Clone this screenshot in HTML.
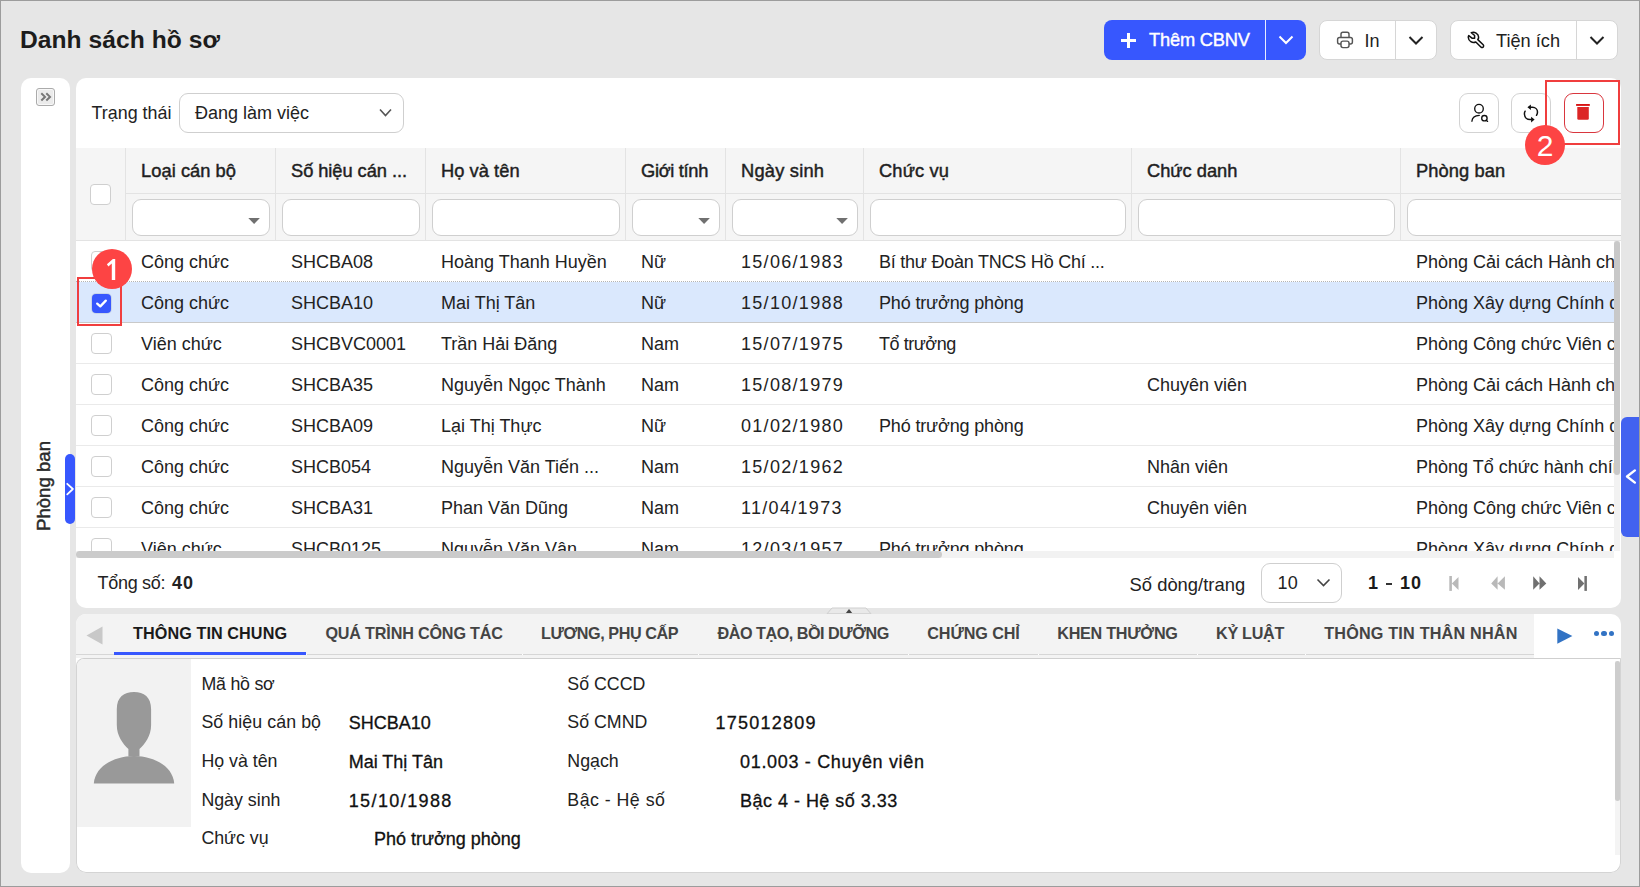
<!DOCTYPE html>
<html><head><meta charset="utf-8"><style>
html,body{margin:0;padding:0;}
body{width:1640px;height:887px;position:relative;overflow:hidden;background:#e6e6e6;font-family:'Liberation Sans', sans-serif;}
.frame{position:absolute;left:0;top:0;width:1640px;height:887px;border:1px solid #9c9c9c;box-sizing:border-box;pointer-events:none;z-index:50;}
.t{position:absolute;white-space:nowrap;line-height:1;font-family:'Liberation Sans', sans-serif;}
</style></head><body>
<div class="t" style="left:20px;top:27.59px;font-size:24.6px;font-weight:700;color:#1c1c1c;letter-spacing:0.054px;">Danh sách hồ sơ</div>
<div style="position:absolute;left:1104px;top:20px;width:202px;height:40px;background:#3757fe;border-radius:8px;"></div>
<div style="position:absolute;left:1265px;top:20px;width:1px;height:40px;background:#e8ecff;"></div>
<div style="position:absolute;left:1121px;top:38.5px;width:15px;height:3px;background:#fff;"></div>
<div style="position:absolute;left:1127px;top:32.5px;width:3px;height:15px;background:#fff;"></div>
<div class="t" style="left:1149px;top:31.45px;font-size:18.3px;font-weight:400;color:#fff;-webkit-text-stroke:0.4px #fff;letter-spacing:-0.201px;">Thêm CBNV</div>
<svg style="position:absolute;left:1278px;top:34px;" width="16" height="12" viewBox="0 0 16 12"><polyline points="1.5,2.5 8,9 14.5,2.5" fill="none" stroke="#fff" stroke-width="2"/></svg>
<div style="position:absolute;left:1319px;top:20px;width:118px;height:40px;background:#fff;border:1px solid #d6d6d6;border-radius:8px;box-sizing:border-box;"></div>
<div style="position:absolute;left:1395px;top:21px;width:1px;height:38px;background:#d6d6d6;"></div>
<svg style="position:absolute;left:1330px;top:25px;" width="30" height="30" viewBox="0 0 30 30"><g fill="none" stroke="#555" stroke-width="1.45" stroke-linejoin="round"><path d="M11 12.2 V9.2 Q11 7.3 12.9 7.3 H17.1 Q19 7.3 19 9.2 V12.2"/><path d="M11 18.9 H9.6 Q7.6 18.9 7.6 16.9 V14.5 Q7.6 12.5 9.6 12.5 H20.4 Q22.4 12.5 22.4 14.5 V16.9 Q22.4 18.9 20.4 18.9 H19"/><rect x="11" y="16.1" width="8" height="6.5" rx="2"/></g></svg>
<div class="t" style="left:1364.5px;top:31.90px;font-size:18px;font-weight:400;color:#222;">In</div>
<svg style="position:absolute;left:1408px;top:35px;" width="16" height="11" viewBox="0 0 16 11"><polyline points="1.5,2 8,8.5 14.5,2" fill="none" stroke="#222" stroke-width="2"/></svg>
<div style="position:absolute;left:1450px;top:20px;width:168px;height:40px;background:#fff;border:1px solid #d6d6d6;border-radius:8px;box-sizing:border-box;"></div>
<div style="position:absolute;left:1576px;top:21px;width:1px;height:38px;background:#d6d6d6;"></div>
<svg style="position:absolute;left:1462px;top:25px;" width="30" height="30" viewBox="0 0 30 30"><path d="M9.3 7.6 C12.5 6.5 16.5 8.5 16.6 12 C16.7 13 16.3 14 15.8 14.6 L21.2 19.8 C22 20.6 21.6 22.3 20.4 22.6 C19.9 22.7 19.5 22.5 19.1 22.2 L13.8 17 C10.3 18.5 6.5 16 6.3 12.5 C6.2 11.8 6.4 11.2 6.7 10.6 L10 13.2 H12.6 V10.5 Z" fill="none" stroke="#111" stroke-width="1.5" stroke-linejoin="round"/></svg>
<div class="t" style="left:1496px;top:31.73px;font-size:18.2px;font-weight:400;color:#222;letter-spacing:-0.004px;">Tiện ích</div>
<svg style="position:absolute;left:1589px;top:35px;" width="16" height="11" viewBox="0 0 16 11"><polyline points="1.5,2 8,8.5 14.5,2" fill="none" stroke="#222" stroke-width="2"/></svg>
<div style="position:absolute;left:21px;top:78px;width:49px;height:795px;background:#fff;border-radius:10px;"></div>
<div style="position:absolute;left:36px;top:88px;width:19px;height:18px;background:#ebebeb;border:1px solid #ababab;border-radius:3px;box-sizing:border-box;box-shadow:inset 0 0 0 1px #f8f8f8;"></div>
<svg style="position:absolute;left:33px;top:85px;" width="25" height="25" viewBox="0 0 25 25"><g fill="none" stroke="#777" stroke-width="2"><polyline points="8.3,8.3 12,11.9 8.3,15.5"/><polyline points="13.3,8.3 17,11.9 13.3,15.5"/></g></svg>
<div class="t" style="left:44.3px;top:486px;font-size:18.6px;font-weight:400;color:#2a2a2a;-webkit-text-stroke:0.45px #2a2a2a;transform:translate(-50%,-50%) rotate(-90deg);line-height:1;">Phòng ban</div>
<div style="position:absolute;left:65px;top:454px;width:10px;height:70px;background:#3757fe;border-radius:5px;"></div>
<svg style="position:absolute;left:60px;top:480px;" width="20" height="20" viewBox="0 0 20 20"><polyline points="7.25,3.8 12.9,9 7.25,14.4" fill="none" stroke="#fff" stroke-width="1.8" stroke-linecap="round" stroke-linejoin="round"/></svg>
<div style="position:absolute;left:76px;top:78px;width:1545px;height:530px;background:#fff;border-radius:10px;"></div>
<div class="t" style="left:91.5px;top:104.58px;font-size:17.9px;font-weight:400;color:#222;letter-spacing:0.012px;">Trạng thái</div>
<div style="position:absolute;left:179px;top:93px;width:225px;height:40px;background:#fff;border:1px solid #cfcfcf;border-radius:9px;box-sizing:border-box;"></div>
<div class="t" style="left:195px;top:103.90px;font-size:18px;font-weight:400;color:#222;letter-spacing:-0.004px;">Đang làm việc</div>
<svg style="position:absolute;left:378px;top:107px;" width="15" height="12" viewBox="0 0 15 12"><polyline points="2,2.5 7.5,8.5 13,2.5" fill="none" stroke="#555" stroke-width="1.6"/></svg>
<div style="position:absolute;left:1459px;top:93px;width:40px;height:40px;background:#fff;border:1px solid #d3d3d3;border-radius:9px;box-sizing:border-box;"></div>
<div style="position:absolute;left:1511px;top:93px;width:40px;height:40px;background:#fff;border:1px solid #d3d3d3;border-radius:9px;box-sizing:border-box;"></div>
<div style="position:absolute;left:1564px;top:93px;width:40px;height:40px;background:#fff;border:1px solid #d9363e;border-radius:9px;box-sizing:border-box;"></div>
<svg style="position:absolute;left:1464px;top:98px;" width="35" height="30" viewBox="0 0 35 30"><g fill="none" stroke="#111" stroke-width="1.35" stroke-linecap="round"><circle cx="15" cy="10.65" r="4.3"/><path d="M7.9 23.2 C8.2 20 11 17.7 15.3 17.4"/><circle cx="20.4" cy="20.2" r="2.7"/><path d="M22.3 22.2 L23.6 23.4"/></g></svg>
<svg style="position:absolute;left:1515px;top:98px;" width="35" height="30" viewBox="0 0 35 30"><g fill="none" stroke="#111" stroke-width="1.5" stroke-linecap="round"><path d="M14.5 9.3 H17.5 C20.5 9.3 22.5 11.5 22.5 14 C22.5 15.3 22.1 16.4 21.5 17.3"/><path d="M10.1 13.2 C9.6 14 9.4 15 9.4 16 C9.6 19.5 12.2 21.6 15 21.6 H17.5"/></g><path d="M12.4 9.3 L15.9 6.5 L15.9 12.1Z M19.6 21.6 L16.1 18.8 L16.1 24.4Z" fill="#111"/></svg>
<svg style="position:absolute;left:1566px;top:96px;" width="35" height="30" viewBox="0 0 35 30"><rect x="10.1" y="8" width="13.7" height="1.9" fill="#d81414"/><path d="M11.3 11 H22.8 V22.5 Q22.8 23.8 21.5 23.8 H12.6 Q11.3 23.8 11.3 22.5 Z" fill="#dc2626"/></svg>
<div style="position:absolute;left:76px;top:148px;width:1545px;height:92px;background:#f5f5f5;"></div>
<div style="position:absolute;left:125px;top:193px;width:1496px;height:1px;background:#e3e3e3;"></div>
<div style="position:absolute;left:76px;top:240px;width:1545px;height:1px;background:#e3e3e3;"></div>
<div style="position:absolute;left:125px;top:148px;width:1px;height:92px;background:#e3e3e3;"></div>
<div style="position:absolute;left:275px;top:148px;width:1px;height:92px;background:#e3e3e3;"></div>
<div style="position:absolute;left:425px;top:148px;width:1px;height:92px;background:#e3e3e3;"></div>
<div style="position:absolute;left:625px;top:148px;width:1px;height:92px;background:#e3e3e3;"></div>
<div style="position:absolute;left:725px;top:148px;width:1px;height:92px;background:#e3e3e3;"></div>
<div style="position:absolute;left:863px;top:148px;width:1px;height:92px;background:#e3e3e3;"></div>
<div style="position:absolute;left:1131px;top:148px;width:1px;height:92px;background:#e3e3e3;"></div>
<div style="position:absolute;left:1400px;top:148px;width:1px;height:92px;background:#e3e3e3;"></div>
<div style="position:absolute;left:90px;top:184px;width:21px;height:21px;background:#fff;border:1px solid #cfcfcf;border-radius:4px;box-sizing:border-box;"></div>
<div class="t" style="left:141px;top:161.84px;font-size:18.3px;font-weight:400;color:#1f1f1f;-webkit-text-stroke:0.45px #1f1f1f;letter-spacing:0.047px;">Loại cán bộ</div>
<div class="t" style="left:291px;top:161.84px;font-size:18.3px;font-weight:400;color:#1f1f1f;-webkit-text-stroke:0.45px #1f1f1f;letter-spacing:-0.062px;">Số hiệu cán ...</div>
<div class="t" style="left:441px;top:161.84px;font-size:18.3px;font-weight:400;color:#1f1f1f;-webkit-text-stroke:0.45px #1f1f1f;letter-spacing:0.044px;">Họ và tên</div>
<div class="t" style="left:641px;top:161.84px;font-size:18.3px;font-weight:400;color:#1f1f1f;-webkit-text-stroke:0.45px #1f1f1f;letter-spacing:-0.326px;">Giới tính</div>
<div class="t" style="left:741px;top:161.84px;font-size:18.3px;font-weight:400;color:#1f1f1f;-webkit-text-stroke:0.45px #1f1f1f;letter-spacing:0.213px;">Ngày sinh</div>
<div class="t" style="left:879px;top:161.84px;font-size:18.3px;font-weight:400;color:#1f1f1f;-webkit-text-stroke:0.45px #1f1f1f;letter-spacing:0.143px;">Chức vụ</div>
<div class="t" style="left:1147px;top:161.84px;font-size:18.3px;font-weight:400;color:#1f1f1f;-webkit-text-stroke:0.45px #1f1f1f;letter-spacing:-0.012px;">Chức danh</div>
<div class="t" style="left:1416px;top:161.84px;font-size:18.3px;font-weight:400;color:#1f1f1f;-webkit-text-stroke:0.45px #1f1f1f;letter-spacing:0.093px;">Phòng ban</div>
<div style="position:absolute;left:132px;top:199px;width:138px;height:37px;background:#fff;border:1px solid #cfcfcf;border-radius:9px;box-sizing:border-box;"></div>
<svg style="position:absolute;left:248px;top:217px;" width="13" height="8" viewBox="0 0 13 8"><path d="M0.3 1.1 H11.9 L6.1 6.9Z" fill="#707070"/></svg>
<div style="position:absolute;left:282px;top:199px;width:138px;height:37px;background:#fff;border:1px solid #cfcfcf;border-radius:9px;box-sizing:border-box;"></div>
<div style="position:absolute;left:432px;top:199px;width:188px;height:37px;background:#fff;border:1px solid #cfcfcf;border-radius:9px;box-sizing:border-box;"></div>
<div style="position:absolute;left:632px;top:199px;width:88px;height:37px;background:#fff;border:1px solid #cfcfcf;border-radius:9px;box-sizing:border-box;"></div>
<svg style="position:absolute;left:698px;top:217px;" width="13" height="8" viewBox="0 0 13 8"><path d="M0.3 1.1 H11.9 L6.1 6.9Z" fill="#707070"/></svg>
<div style="position:absolute;left:732px;top:199px;width:126px;height:37px;background:#fff;border:1px solid #cfcfcf;border-radius:9px;box-sizing:border-box;"></div>
<svg style="position:absolute;left:836px;top:217px;" width="13" height="8" viewBox="0 0 13 8"><path d="M0.3 1.1 H11.9 L6.1 6.9Z" fill="#707070"/></svg>
<div style="position:absolute;left:870px;top:199px;width:256px;height:37px;background:#fff;border:1px solid #cfcfcf;border-radius:9px;box-sizing:border-box;"></div>
<div style="position:absolute;left:1138px;top:199px;width:257px;height:37px;background:#fff;border:1px solid #cfcfcf;border-radius:9px;box-sizing:border-box;"></div>
<div style="position:absolute;left:1407px;top:199px;width:233px;height:37px;background:#fff;border:1px solid #cfcfcf;border-radius:9px;box-sizing:border-box;"></div>
<div style="position:absolute;left:1621px;top:190px;width:18px;height:50px;background:#e6e6e6;"></div>
<div style="position:absolute;left:76px;top:241px;width:1538px;height:310px;overflow:hidden;">
<div style="position:absolute;left:0px;top:40px;width:1538px;height:1px;background:#eaeaea;"></div>
<div style="position:absolute;left:15px;top:10px;width:21px;height:21px;background:#fff;border:1px solid #cfcfcf;border-radius:4px;box-sizing:border-box;"></div>
<div class="t" style="left:65px;top:12.30px;font-size:18px;font-weight:400;color:#222;">Công chức</div>
<div class="t" style="left:215px;top:12.30px;font-size:18px;font-weight:400;color:#222;">SHCBA08</div>
<div class="t" style="left:365px;top:12.30px;font-size:18px;font-weight:400;color:#222;">Hoàng Thanh Huyền</div>
<div class="t" style="left:565px;top:12.30px;font-size:18px;font-weight:400;color:#222;">Nữ</div>
<div class="t" style="left:665px;top:12.30px;font-size:18px;font-weight:400;color:#222;letter-spacing:1.3px;">15/06/1983</div>
<div class="t" style="left:803px;top:12.30px;font-size:18px;font-weight:400;color:#222;letter-spacing:-0.23px;">Bí thư Đoàn TNCS Hồ Chí ...</div>
<div class="t" style="left:1340px;top:12.30px;font-size:18px;font-weight:400;color:#222;">Phòng Cải cách Hành chính</div>
<div style="position:absolute;left:0px;top:41px;width:1538px;height:41px;background:#dae8fd;"></div>
<div style="position:absolute;left:0;top:40px;width:1538px;height:1px;background:#fff;"></div>
<div style="position:absolute;left:0;top:40px;width:1538px;height:0;border-top:1px dotted #b4b4b4;"></div>
<div style="position:absolute;left:0px;top:81px;width:1538px;height:1px;background:#c9c9c9;"></div>
<div style="position:absolute;left:16px;top:53px;width:19px;height:19px;background:#3757fe;border-radius:4px;box-shadow:0 0 0 1px rgba(0,0,0,0.08);"></div>
<svg style="position:absolute;left:18px;top:55px;" width="15" height="15" viewBox="0 0 15 15"><polyline points="3.2,7.6 6.3,10.4 11.8,4.6" fill="none" stroke="#fff" stroke-width="2.3" stroke-linecap="round" stroke-linejoin="round"/></svg>
<div class="t" style="left:65px;top:53.30px;font-size:18px;font-weight:400;color:#222;">Công chức</div>
<div class="t" style="left:215px;top:53.30px;font-size:18px;font-weight:400;color:#222;">SHCBA10</div>
<div class="t" style="left:365px;top:53.30px;font-size:18px;font-weight:400;color:#222;">Mai Thị Tân</div>
<div class="t" style="left:565px;top:53.30px;font-size:18px;font-weight:400;color:#222;">Nữ</div>
<div class="t" style="left:665px;top:53.30px;font-size:18px;font-weight:400;color:#222;letter-spacing:1.3px;">15/10/1988</div>
<div class="t" style="left:803px;top:53.30px;font-size:18px;font-weight:400;color:#222;letter-spacing:-0.15px;">Phó trưởng phòng</div>
<div class="t" style="left:1340px;top:53.30px;font-size:18px;font-weight:400;color:#222;">Phòng Xây dựng Chính quyền</div>
<div style="position:absolute;left:0px;top:122px;width:1538px;height:1px;background:#eaeaea;"></div>
<div style="position:absolute;left:15px;top:92px;width:21px;height:21px;background:#fff;border:1px solid #cfcfcf;border-radius:4px;box-sizing:border-box;"></div>
<div class="t" style="left:65px;top:94.30px;font-size:18px;font-weight:400;color:#222;">Viên chức</div>
<div class="t" style="left:215px;top:94.30px;font-size:18px;font-weight:400;color:#222;">SHCBVC0001</div>
<div class="t" style="left:365px;top:94.30px;font-size:18px;font-weight:400;color:#222;">Trần Hải Đăng</div>
<div class="t" style="left:565px;top:94.30px;font-size:18px;font-weight:400;color:#222;">Nam</div>
<div class="t" style="left:665px;top:94.30px;font-size:18px;font-weight:400;color:#222;letter-spacing:1.3px;">15/07/1975</div>
<div class="t" style="left:803px;top:94.30px;font-size:18px;font-weight:400;color:#222;letter-spacing:-0.45px;">Tổ trưởng</div>
<div class="t" style="left:1340px;top:94.30px;font-size:18px;font-weight:400;color:#222;">Phòng Công chức Viên chức</div>
<div style="position:absolute;left:0px;top:163px;width:1538px;height:1px;background:#eaeaea;"></div>
<div style="position:absolute;left:15px;top:133px;width:21px;height:21px;background:#fff;border:1px solid #cfcfcf;border-radius:4px;box-sizing:border-box;"></div>
<div class="t" style="left:65px;top:135.30px;font-size:18px;font-weight:400;color:#222;">Công chức</div>
<div class="t" style="left:215px;top:135.30px;font-size:18px;font-weight:400;color:#222;">SHCBA35</div>
<div class="t" style="left:365px;top:135.30px;font-size:18px;font-weight:400;color:#222;">Nguyễn Ngọc Thành</div>
<div class="t" style="left:565px;top:135.30px;font-size:18px;font-weight:400;color:#222;">Nam</div>
<div class="t" style="left:665px;top:135.30px;font-size:18px;font-weight:400;color:#222;letter-spacing:1.3px;">15/08/1979</div>
<div class="t" style="left:1071px;top:135.30px;font-size:18px;font-weight:400;color:#222;">Chuyên viên</div>
<div class="t" style="left:1340px;top:135.30px;font-size:18px;font-weight:400;color:#222;">Phòng Cải cách Hành chính</div>
<div style="position:absolute;left:0px;top:204px;width:1538px;height:1px;background:#eaeaea;"></div>
<div style="position:absolute;left:15px;top:174px;width:21px;height:21px;background:#fff;border:1px solid #cfcfcf;border-radius:4px;box-sizing:border-box;"></div>
<div class="t" style="left:65px;top:176.30px;font-size:18px;font-weight:400;color:#222;">Công chức</div>
<div class="t" style="left:215px;top:176.30px;font-size:18px;font-weight:400;color:#222;">SHCBA09</div>
<div class="t" style="left:365px;top:176.30px;font-size:18px;font-weight:400;color:#222;">Lại Thị Thực</div>
<div class="t" style="left:565px;top:176.30px;font-size:18px;font-weight:400;color:#222;">Nữ</div>
<div class="t" style="left:665px;top:176.30px;font-size:18px;font-weight:400;color:#222;letter-spacing:1.3px;">01/02/1980</div>
<div class="t" style="left:803px;top:176.30px;font-size:18px;font-weight:400;color:#222;letter-spacing:-0.15px;">Phó trưởng phòng</div>
<div class="t" style="left:1340px;top:176.30px;font-size:18px;font-weight:400;color:#222;">Phòng Xây dựng Chính quyền</div>
<div style="position:absolute;left:0px;top:245px;width:1538px;height:1px;background:#eaeaea;"></div>
<div style="position:absolute;left:15px;top:215px;width:21px;height:21px;background:#fff;border:1px solid #cfcfcf;border-radius:4px;box-sizing:border-box;"></div>
<div class="t" style="left:65px;top:217.30px;font-size:18px;font-weight:400;color:#222;">Công chức</div>
<div class="t" style="left:215px;top:217.30px;font-size:18px;font-weight:400;color:#222;">SHCB054</div>
<div class="t" style="left:365px;top:217.30px;font-size:18px;font-weight:400;color:#222;">Nguyễn Văn Tiến ...</div>
<div class="t" style="left:565px;top:217.30px;font-size:18px;font-weight:400;color:#222;">Nam</div>
<div class="t" style="left:665px;top:217.30px;font-size:18px;font-weight:400;color:#222;letter-spacing:1.3px;">15/02/1962</div>
<div class="t" style="left:1071px;top:217.30px;font-size:18px;font-weight:400;color:#222;">Nhân viên</div>
<div class="t" style="left:1340px;top:217.30px;font-size:18px;font-weight:400;color:#222;">Phòng Tổ chức hành chính</div>
<div style="position:absolute;left:0px;top:286px;width:1538px;height:1px;background:#eaeaea;"></div>
<div style="position:absolute;left:15px;top:256px;width:21px;height:21px;background:#fff;border:1px solid #cfcfcf;border-radius:4px;box-sizing:border-box;"></div>
<div class="t" style="left:65px;top:258.30px;font-size:18px;font-weight:400;color:#222;">Công chức</div>
<div class="t" style="left:215px;top:258.30px;font-size:18px;font-weight:400;color:#222;">SHCBA31</div>
<div class="t" style="left:365px;top:258.30px;font-size:18px;font-weight:400;color:#222;">Phan Văn Dũng</div>
<div class="t" style="left:565px;top:258.30px;font-size:18px;font-weight:400;color:#222;">Nam</div>
<div class="t" style="left:665px;top:258.30px;font-size:18px;font-weight:400;color:#222;letter-spacing:1.3px;">11/04/1973</div>
<div class="t" style="left:1071px;top:258.30px;font-size:18px;font-weight:400;color:#222;">Chuyên viên</div>
<div class="t" style="left:1340px;top:258.30px;font-size:18px;font-weight:400;color:#222;">Phòng Công chức Viên chức</div>
<div style="position:absolute;left:0px;top:327px;width:1538px;height:1px;background:#eaeaea;"></div>
<div style="position:absolute;left:15px;top:297px;width:21px;height:21px;background:#fff;border:1px solid #cfcfcf;border-radius:4px;box-sizing:border-box;"></div>
<div class="t" style="left:65px;top:299.30px;font-size:18px;font-weight:400;color:#222;">Viên chức</div>
<div class="t" style="left:215px;top:299.30px;font-size:18px;font-weight:400;color:#222;">SHCB0125</div>
<div class="t" style="left:365px;top:299.30px;font-size:18px;font-weight:400;color:#222;">Nguyễn Văn Vân</div>
<div class="t" style="left:565px;top:299.30px;font-size:18px;font-weight:400;color:#222;">Nam</div>
<div class="t" style="left:665px;top:299.30px;font-size:18px;font-weight:400;color:#222;letter-spacing:1.3px;">12/03/1957</div>
<div class="t" style="left:803px;top:299.30px;font-size:18px;font-weight:400;color:#222;letter-spacing:-0.15px;">Phó trưởng phòng</div>
<div class="t" style="left:1340px;top:299.30px;font-size:18px;font-weight:400;color:#222;">Phòng Xây dựng Chính quyền</div>
</div>
<div style="position:absolute;left:1621px;top:417px;width:18px;height:120px;background:#4262f0;border-radius:6px 0 0 6px;"></div>
<svg style="position:absolute;left:1621px;top:460px;" width="18" height="40" viewBox="0 0 18 40"><polyline points="13.9,10.4 6,16.5 13.9,22.6" fill="none" stroke="#fff" stroke-width="2.4" stroke-linecap="round" stroke-linejoin="round"/></svg>
<div style="position:absolute;left:76px;top:551px;width:1538px;height:7px;background:#f2f2f2;"></div>
<div style="position:absolute;left:76px;top:551px;width:866px;height:7px;background:#cbcbcb;border-radius:4px;"></div>
<div style="position:absolute;left:1614px;top:241px;width:6px;height:310px;background:#f2f2f2;"></div>
<div style="position:absolute;left:1614px;top:241px;width:6px;height:234px;background:#c8c8c8;border-radius:3px;"></div>
<div class="t" style="left:97.5px;top:574.00px;font-size:18px;font-weight:400;color:#222;letter-spacing:-0.292px;">Tổng số:</div>
<div class="t" style="left:172px;top:574.00px;font-size:18px;font-weight:700;color:#222;letter-spacing:0.969px;">40</div>
<div class="t" style="left:1129.5px;top:575.66px;font-size:18.4px;font-weight:400;color:#222;letter-spacing:0.013px;">Số dòng/trang</div>
<div style="position:absolute;left:1261px;top:563px;width:81px;height:40px;background:#fff;border:1px solid #cfcfcf;border-radius:9px;box-sizing:border-box;"></div>
<div class="t" style="left:1277.5px;top:574.20px;font-size:18px;font-weight:400;color:#222;letter-spacing:0.269px;">10</div>
<svg style="position:absolute;left:1315px;top:576px;" width="17" height="13" viewBox="0 0 17 13"><polyline points="2.5,3.5 8.5,9.5 14.5,3.5" fill="none" stroke="#444" stroke-width="1.6"/></svg>
<div class="t" style="left:1368px;top:574.20px;font-size:18px;font-weight:700;color:#1a1a1a;">1</div>
<div style="position:absolute;left:1385.7px;top:583px;width:6px;height:1.6px;background:#333;"></div>
<div class="t" style="left:1400px;top:574.20px;font-size:18px;font-weight:700;color:#1a1a1a;letter-spacing:0.969px;">10</div>
<svg style="position:absolute;left:1440px;top:568px;" width="160" height="32" viewBox="0 0 160 32"><g fill="#b9b9b9"><rect x="9.3" y="8" width="2.6" height="14.9"/><path d="M11.9 15.4 L18.5 9 V22Z"/><path d="M51.2 15.4 L57.6 8.3 V21.7Z M57.6 15.4 L64.9 8.3 V21.7Z"/></g><g fill="#707070"><path d="M93.2 8.3 L99.5 15.4 L93.2 21.7Z M99.5 8.3 L106.3 15.4 L99.5 21.7Z"/><path d="M138 9 L144.4 15.4 L138 22Z"/><rect x="144.4" y="8" width="2.5" height="14.9"/></g></svg>
<svg style="position:absolute;left:826px;top:607px;" width="46" height="8" viewBox="0 0 46 8"><path d="M6 1 H40 L45 6.8 H1Z" fill="#e9e9e9" stroke="#cfcfcf" stroke-width="1"/><path d="M19.9 6 L23 2 L26.2 6Z" fill="#444"/></svg>
<div style="position:absolute;left:76px;top:614px;width:1545px;height:259px;background:#fff;border-radius:10px;"></div>
<div style="position:absolute;left:76px;top:614px;width:1458px;height:45px;background:#f3f3f3;border-top-left-radius:10px;"></div>
<div style="position:absolute;left:76px;top:654px;width:1458px;height:1px;background:#d6d6d6;"></div>
<svg style="position:absolute;left:86px;top:626px;" width="17" height="19" viewBox="0 0 17 19"><path d="M16.5 0.5 V18.5 L0.5 9.5Z" fill="#c8c8c8"/></svg>
<div class="t" style="left:133px;top:625.43px;font-size:16.2px;font-weight:700;color:#1a1a1a;letter-spacing:0.080px;">THÔNG TIN CHUNG</div>
<div style="position:absolute;left:306px;top:654px;width:1px;height:1px;background:#fff;"></div>
<div class="t" style="left:325.4px;top:625.43px;font-size:16.2px;font-weight:700;color:#444;letter-spacing:-0.185px;">QUÁ TRÌNH CÔNG TÁC</div>
<div style="position:absolute;left:522px;top:654px;width:1px;height:1px;background:#fff;"></div>
<div class="t" style="left:541px;top:625.43px;font-size:16.2px;font-weight:700;color:#444;letter-spacing:-0.444px;">LƯƠNG, PHỤ CẤP</div>
<div style="position:absolute;left:698px;top:654px;width:1px;height:1px;background:#fff;"></div>
<div class="t" style="left:717.6px;top:625.43px;font-size:16.2px;font-weight:700;color:#444;letter-spacing:-0.496px;">ĐÀO TẠO, BỒI DƯỠNG</div>
<div style="position:absolute;left:908px;top:654px;width:1px;height:1px;background:#fff;"></div>
<div class="t" style="left:927.3px;top:625.43px;font-size:16.2px;font-weight:700;color:#444;letter-spacing:-0.121px;">CHỨNG CHỈ</div>
<div style="position:absolute;left:1038px;top:654px;width:1px;height:1px;background:#fff;"></div>
<div class="t" style="left:1057.3px;top:625.43px;font-size:16.2px;font-weight:700;color:#444;letter-spacing:-0.287px;">KHEN THƯỞNG</div>
<div style="position:absolute;left:1197px;top:654px;width:1px;height:1px;background:#fff;"></div>
<div class="t" style="left:1216px;top:625.43px;font-size:16.2px;font-weight:700;color:#444;letter-spacing:-0.290px;">KỶ LUẬT</div>
<div style="position:absolute;left:1305px;top:654px;width:1px;height:1px;background:#fff;"></div>
<div class="t" style="left:1324.2px;top:625.43px;font-size:16.2px;font-weight:700;color:#444;letter-spacing:0.192px;">THÔNG TIN THÂN NHÂN</div>
<div style="position:absolute;left:1534px;top:654px;width:1px;height:1px;background:#fff;"></div>
<div style="position:absolute;left:114px;top:652px;width:192px;height:3px;background:#3757fe;"></div>
<svg style="position:absolute;left:1550px;top:620px;" width="30" height="30" viewBox="0 0 30 30"><path d="M7.3 8.5 L22.4 16.1 L7.3 23.8Z" fill="#3273c4"/></svg>
<div style="position:absolute;left:1593.8000000000002px;top:630.9px;width:5.2px;height:5.2px;background:#3273c4;border-radius:50%;"></div>
<div style="position:absolute;left:1601.4px;top:630.9px;width:5.2px;height:5.2px;background:#3273c4;border-radius:50%;"></div>
<div style="position:absolute;left:1608.8000000000002px;top:630.9px;width:5.2px;height:5.2px;background:#3273c4;border-radius:50%;"></div>
<div style="position:absolute;left:76px;top:658px;width:12px;height:12px;background:#fff;"></div>
<div style="position:absolute;left:76px;top:658px;width:1545px;height:215px;background:#fff;border:1px solid #d4d4d4;border-top-color:#cfcfcf;border-radius:8px 0 10px 10px;box-sizing:border-box;"></div>
<div style="position:absolute;left:77px;top:659px;width:114px;height:168px;background:#f2f2f2;border-top-left-radius:7px;"></div>
<svg style="position:absolute;left:85px;top:680px;" width="100" height="110" viewBox="0 0 100 110"><path d="M31.8 29 C31.8 17 39 11.9 49 11.9 C59 11.9 66.1 17 66.1 29 V45 C66.1 56 60 64 54.5 69 V76.5 H43.4 V69 C38 64 31.8 56 31.8 45 Z" fill="#999"/><path d="M8.8 103.4 C10 87 28 76 49 75.9 C70 76 88 87 89.2 103.4 Z" fill="#999"/></svg>
<div style="position:absolute;left:1615px;top:661px;width:5px;height:194px;background:#f4f4f4;"></div>
<div style="position:absolute;left:1615px;top:661px;width:5px;height:140px;background:#cdcdcd;border-radius:3px;"></div>
<div class="t" style="left:201.4px;top:675.87px;font-size:17.8px;font-weight:400;color:#222;letter-spacing:-0.217px;">Mã hồ sơ</div>
<div class="t" style="left:201.4px;top:714.37px;font-size:17.8px;font-weight:400;color:#222;letter-spacing:0.074px;">Số hiệu cán bộ</div>
<div class="t" style="left:348.7px;top:714.20px;font-size:18px;font-weight:400;color:#111;-webkit-text-stroke:0.3px #111;letter-spacing:-0.008px;">SHCBA10</div>
<div class="t" style="left:201.4px;top:752.87px;font-size:17.8px;font-weight:400;color:#222;">Họ và tên</div>
<div class="t" style="left:348.7px;top:752.70px;font-size:18px;font-weight:400;color:#111;-webkit-text-stroke:0.3px #111;">Mai Thị Tân</div>
<div class="t" style="left:201.4px;top:791.67px;font-size:17.8px;font-weight:400;color:#222;">Ngày sinh</div>
<div class="t" style="left:348.7px;top:791.50px;font-size:18px;font-weight:400;color:#111;-webkit-text-stroke:0.3px #111;letter-spacing:1.4px;">15/10/1988</div>
<div class="t" style="left:201.4px;top:830.37px;font-size:17.8px;font-weight:400;color:#222;">Chức vụ</div>
<div class="t" style="left:373.9px;top:830.20px;font-size:18px;font-weight:400;color:#111;-webkit-text-stroke:0.3px #111;">Phó trưởng phòng</div>
<div class="t" style="left:567.3px;top:675.87px;font-size:17.8px;font-weight:400;color:#222;">Số CCCD</div>
<div class="t" style="left:567.3px;top:714.37px;font-size:17.8px;font-weight:400;color:#222;">Số CMND</div>
<div class="t" style="left:715.6px;top:714.20px;font-size:18px;font-weight:400;color:#111;-webkit-text-stroke:0.3px #111;letter-spacing:1.236px;">175012809</div>
<div class="t" style="left:567.3px;top:752.87px;font-size:17.8px;font-weight:400;color:#222;">Ngạch</div>
<div class="t" style="left:740px;top:752.70px;font-size:18px;font-weight:400;color:#111;-webkit-text-stroke:0.3px #111;letter-spacing:0.678px;">01.003 - Chuyên viên</div>
<div class="t" style="left:567.3px;top:791.67px;font-size:17.8px;font-weight:400;color:#222;letter-spacing:0.469px;">Bậc - Hệ số</div>
<div class="t" style="left:740px;top:791.50px;font-size:18px;font-weight:400;color:#111;-webkit-text-stroke:0.3px #111;letter-spacing:0.483px;">Bậc 4 - Hệ số 3.33</div>
<div style="position:absolute;left:77px;top:277px;width:45px;height:49px;border:2px solid #f03e3e;box-sizing:border-box;"></div>
<div style="position:absolute;left:1545px;top:80px;width:75px;height:65px;border:2px solid #f03e3e;box-sizing:border-box;"></div>
<div style="position:absolute;left:92px;top:249px;width:40px;height:40px;background:#fd4444;border-radius:50%;"></div>
<svg style="position:absolute;left:92px;top:249px;" width="40" height="40" viewBox="0 0 40 40"><path d="M14.9 15.3 L20.9 9.9 H23.2 V31.1 H19.8 V14.4 L16.4 17.5 Z" fill="#fff"/></svg>
<div style="position:absolute;left:1525px;top:125px;width:40px;height:40px;background:#fd4444;border-radius:50%;"></div>
<div class="t" style="left:1525px;width:40px;text-align:center;top:130.60px;font-size:30px;color:#fff;">2</div>
<div class="frame"></div>
</body></html>
